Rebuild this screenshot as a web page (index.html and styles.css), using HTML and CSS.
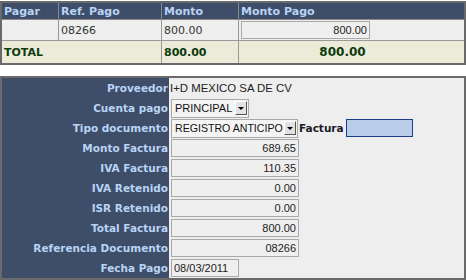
FILE: index.html
```html
<!DOCTYPE html>
<html>
<head>
<meta charset="UTF-8">
<title>Pago</title>
<link rel="stylesheet" href="styles.css">
</head>
<body>
  <table class="pagos">
    <tr>
      <th class="c-pagar">Pagar</th>
      <th class="c-ref">Ref. Pago</th>
      <th class="c-monto">Monto</th>
      <th>Monto Pago</th>
    </tr>
    <tr class="fila">
      <td></td>
      <td>08266</td>
      <td>800.00</td>
      <td><input class="num pago" value="800.00"></td>
    </tr>
    <tr class="total">
      <td colspan="2">TOTAL</td>
      <td>800.00</td>
      <td class="gran">800.00</td>
    </tr>
  </table>

  <table class="datos">
    <tr>
      <th>Proveedor</th>
      <td class="texto">I+D MEXICO SA DE CV</td>
    </tr>
    <tr>
      <th>Cuenta pago</th>
      <td><span class="combo w-cuenta">PRINCIPAL<i class="flecha"></i></span></td>
    </tr>
    <tr>
      <th>Tipo documento</th>
      <td><span class="combo w-tipo">REGISTRO ANTICIPO<i class="flecha"></i></span><b class="lbl">Factura</b><input class="factura"></td>
    </tr>
    <tr><th>Monto Factura</th><td><input class="num" value="689.65"></td></tr>
    <tr><th>IVA Factura</th><td><input class="num" value="110.35"></td></tr>
    <tr><th>IVA Retenido</th><td><input class="num" value="0.00"></td></tr>
    <tr><th>ISR Retenido</th><td><input class="num" value="0.00"></td></tr>
    <tr><th>Total Factura</th><td><input class="num" value="800.00"></td></tr>
    <tr><th>Referencia Documento</th><td><input class="num" value="08266"></td></tr>
    <tr><th>Fecha Pago</th><td><input class="fecha" value="08/03/2011"></td></tr>
  </table>
</body>
</html>
```

FILE: styles.css
```css
/* Base */
html, body {
  margin: 0;
  padding: 0;
  background: white;
}
body {
  padding-top: 1px;
  font-family: "DejaVu Sans", Verdana, sans-serif;
  font-size: 11px;
}
table {
  width: 466px;
  border-collapse: collapse;
  border: 2px solid #6a6a6a;
}
input {
  font-family: "Liberation Sans", Arial, sans-serif;
  font-size: 11px;
  color: #222;
  height: 18px;
  box-sizing: border-box;
  border: 1px solid #a9a9a9;
  background: #efefef;
  padding: 0 2px;
  margin: 0;
  outline: 0;
}
input.num { text-align: right; width: 128px; }

/* Payments table */
.pagos th {
  background: #3e4e68;
  color: #b9d3f5;
  font-weight: bold;
  text-align: left;
  height: 16px;
  padding: 0 2px;
  border: 1px solid #8a8a8a;
}
.pagos td {
  border: 1px solid #999;
  padding: 0 2px;
  color: #333;
}
.pagos .c-pagar { width: 52px; }
.pagos .c-ref { width: 98px; }
.pagos .c-monto { width: 72px; }
.pagos .fila td { background: #eeeeee; height: 20px; }
.pagos input.pago { width: 129px; }
.pagos .total td {
  background: #ecebda;
  height: 22px;
  font-weight: bold;
  color: #0c3a0c;
}
.pagos .total td.gran {
  text-align: center;
  font-size: 12px;
  padding-right: 20px;
}

/* Detail form */
.datos {
  margin-top: 11px;
  background: #eeeeee;
}
.datos th {
  background: #3e4e68;
  color: #b9d3f5;
  font-size: 10.5px;
  text-align: right;
  width: 166px;
  padding: 0 1px 0 0;
  height: 20px;
  white-space: nowrap;
}
.datos td {
  padding: 0 2px;
  height: 20px;
  white-space: nowrap;
}
.datos td.texto {
  color: #222;
  padding-left: 1px;
  font-family: "Liberation Sans", Arial, sans-serif;
  font-size: 11.4px;
}
.combo {
  display: inline-flex;
  align-items: center;
  justify-content: space-between;
  box-sizing: border-box;
  height: 19px;
  border: 1px solid #a9a9a9;
  background: #f4f4f4;
  font-family: "Liberation Sans", Arial, sans-serif;
  font-size: 11px;
  color: #111;
  padding: 0 1px 0 3px;
  vertical-align: middle;
}
.w-cuenta { width: 78px; }
.w-tipo { width: 127px; font-size: 10.6px; }
.flecha {
  width: 12px;
  height: 14px;
  background: #e2e2e2;
  border: 1px solid;
  border-color: #fff #555 #555 #fff;
  box-sizing: border-box;
  position: relative;
  flex: none;
}
.flecha::after {
  content: "";
  position: absolute;
  left: 2px;
  top: 5px;
  border-left: 3px solid transparent;
  border-right: 3px solid transparent;
  border-top: 3px solid #000;
}
.lbl {
  font-family: "DejaVu Sans", Verdana, sans-serif;
  font-size: 10.5px;
  color: #1a1a2a;
  margin: 0 2px 0 1px;
  vertical-align: middle;
}
input.factura {
  width: 67px;
  height: 18px;
  background: #b8cde8;
  border: 1px solid #1e3b8a;
  vertical-align: middle;
}
input.fecha { width: 68px; }
```
